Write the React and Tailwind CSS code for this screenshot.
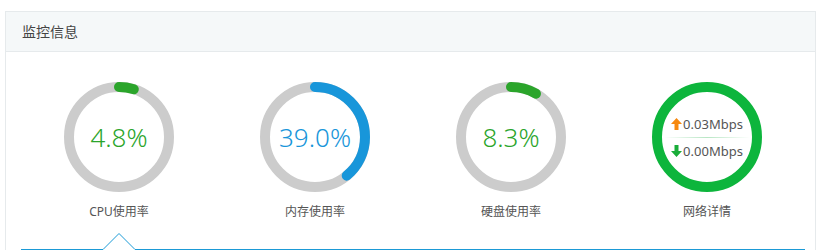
import React from 'react'

const font = { fontFamily: '"Noto Sans", "Noto Sans CJK SC", sans-serif' }

function Gauge({ value, color, label }) {
  const r = 50
  const c = 2 * Math.PI * r
  const len = (value / 100) * c
  return (
    <div className="flex flex-col items-center">
      <div className="relative w-[110px] h-[110px]">
        <svg width="110" height="110" viewBox="0 0 110 110">
          <circle cx="55" cy="55" r={r} fill="none" stroke="#cccccc" strokeWidth="10" />
          <circle
            cx="55"
            cy="55"
            r={r}
            fill="none"
            stroke={color}
            strokeWidth="10"
            strokeLinecap="round"
            strokeDasharray={`${len} ${c}`}
            transform="rotate(-90 55 55)"
          />
        </svg>
        <div
          className="absolute inset-0 flex items-center justify-center text-[26px] font-light"
          style={{ color }}
        >
          {value.toFixed(1)}%
        </div>
      </div>
      <div className="mt-[12px] text-[12px] leading-4 text-[#555]">{label}</div>
    </div>
  )
}

function Network() {
  return (
    <div className="flex flex-col items-center">
      <div className="w-[110px] h-[110px] rounded-full border-[10px] border-[#0db53c] flex flex-col items-center justify-center">
        <div className="flex items-center text-[13px] leading-5 text-[#555]">
          <svg width="11" height="12" viewBox="0 0 11 12" className="mr-px">
            <path d="M5.5 0 L11 6 H7.5 V12 H3.5 V6 H0 Z" fill="#f7890f" />
          </svg>
          0.03Mbps
        </div>
        <div className="my-[3px] h-px w-[86px] bg-gradient-to-r from-transparent via-[#b8e6c4] to-transparent" />
        <div className="flex items-center text-[13px] leading-5 text-[#555]">
          <svg width="11" height="12" viewBox="0 0 11 12" className="mr-px">
            <path d="M5.5 12 L11 6 H7.5 V0 H3.5 V6 H0 Z" fill="#1aad3a" />
          </svg>
          0.00Mbps
        </div>
      </div>
      <div className="mt-[12px] text-[12px] leading-4 text-[#555]">网络详情</div>
    </div>
  )
}

export default function App() {
  return (
    <div className="w-[820px] h-[250px] bg-white pt-[11px] pl-[5px] overflow-hidden" style={font}>
      <div className="w-[811px] border border-[#e6eaec] border-b-0">
        <div className="h-[40px] bg-[#f5f8f9] border-b border-[#e6eaec] flex items-center pl-[16px] text-[14px] text-[#444]">
          监控信息
        </div>
        <div className="pl-[15px] pt-[30px]">
          <div className="grid grid-cols-4 w-[784px]">
            <Gauge value={4.8} color="#2ba52b" label="CPU使用率" />
            <Gauge value={39.0} color="#1896da" label="内存使用率" />
            <Gauge value={8.3} color="#2ba52b" label="硬盘使用率" />
            <Network />
          </div>
          <svg width="784" height="18" viewBox="0 0 784 18" className="block mt-[12px]">
            <path d="M0 17.5 H82 L98 1.5 L114 17.5 H784" fill="none" stroke="#1b9ad6" strokeWidth="1" />
          </svg>
        </div>
      </div>
    </div>
  )
}
